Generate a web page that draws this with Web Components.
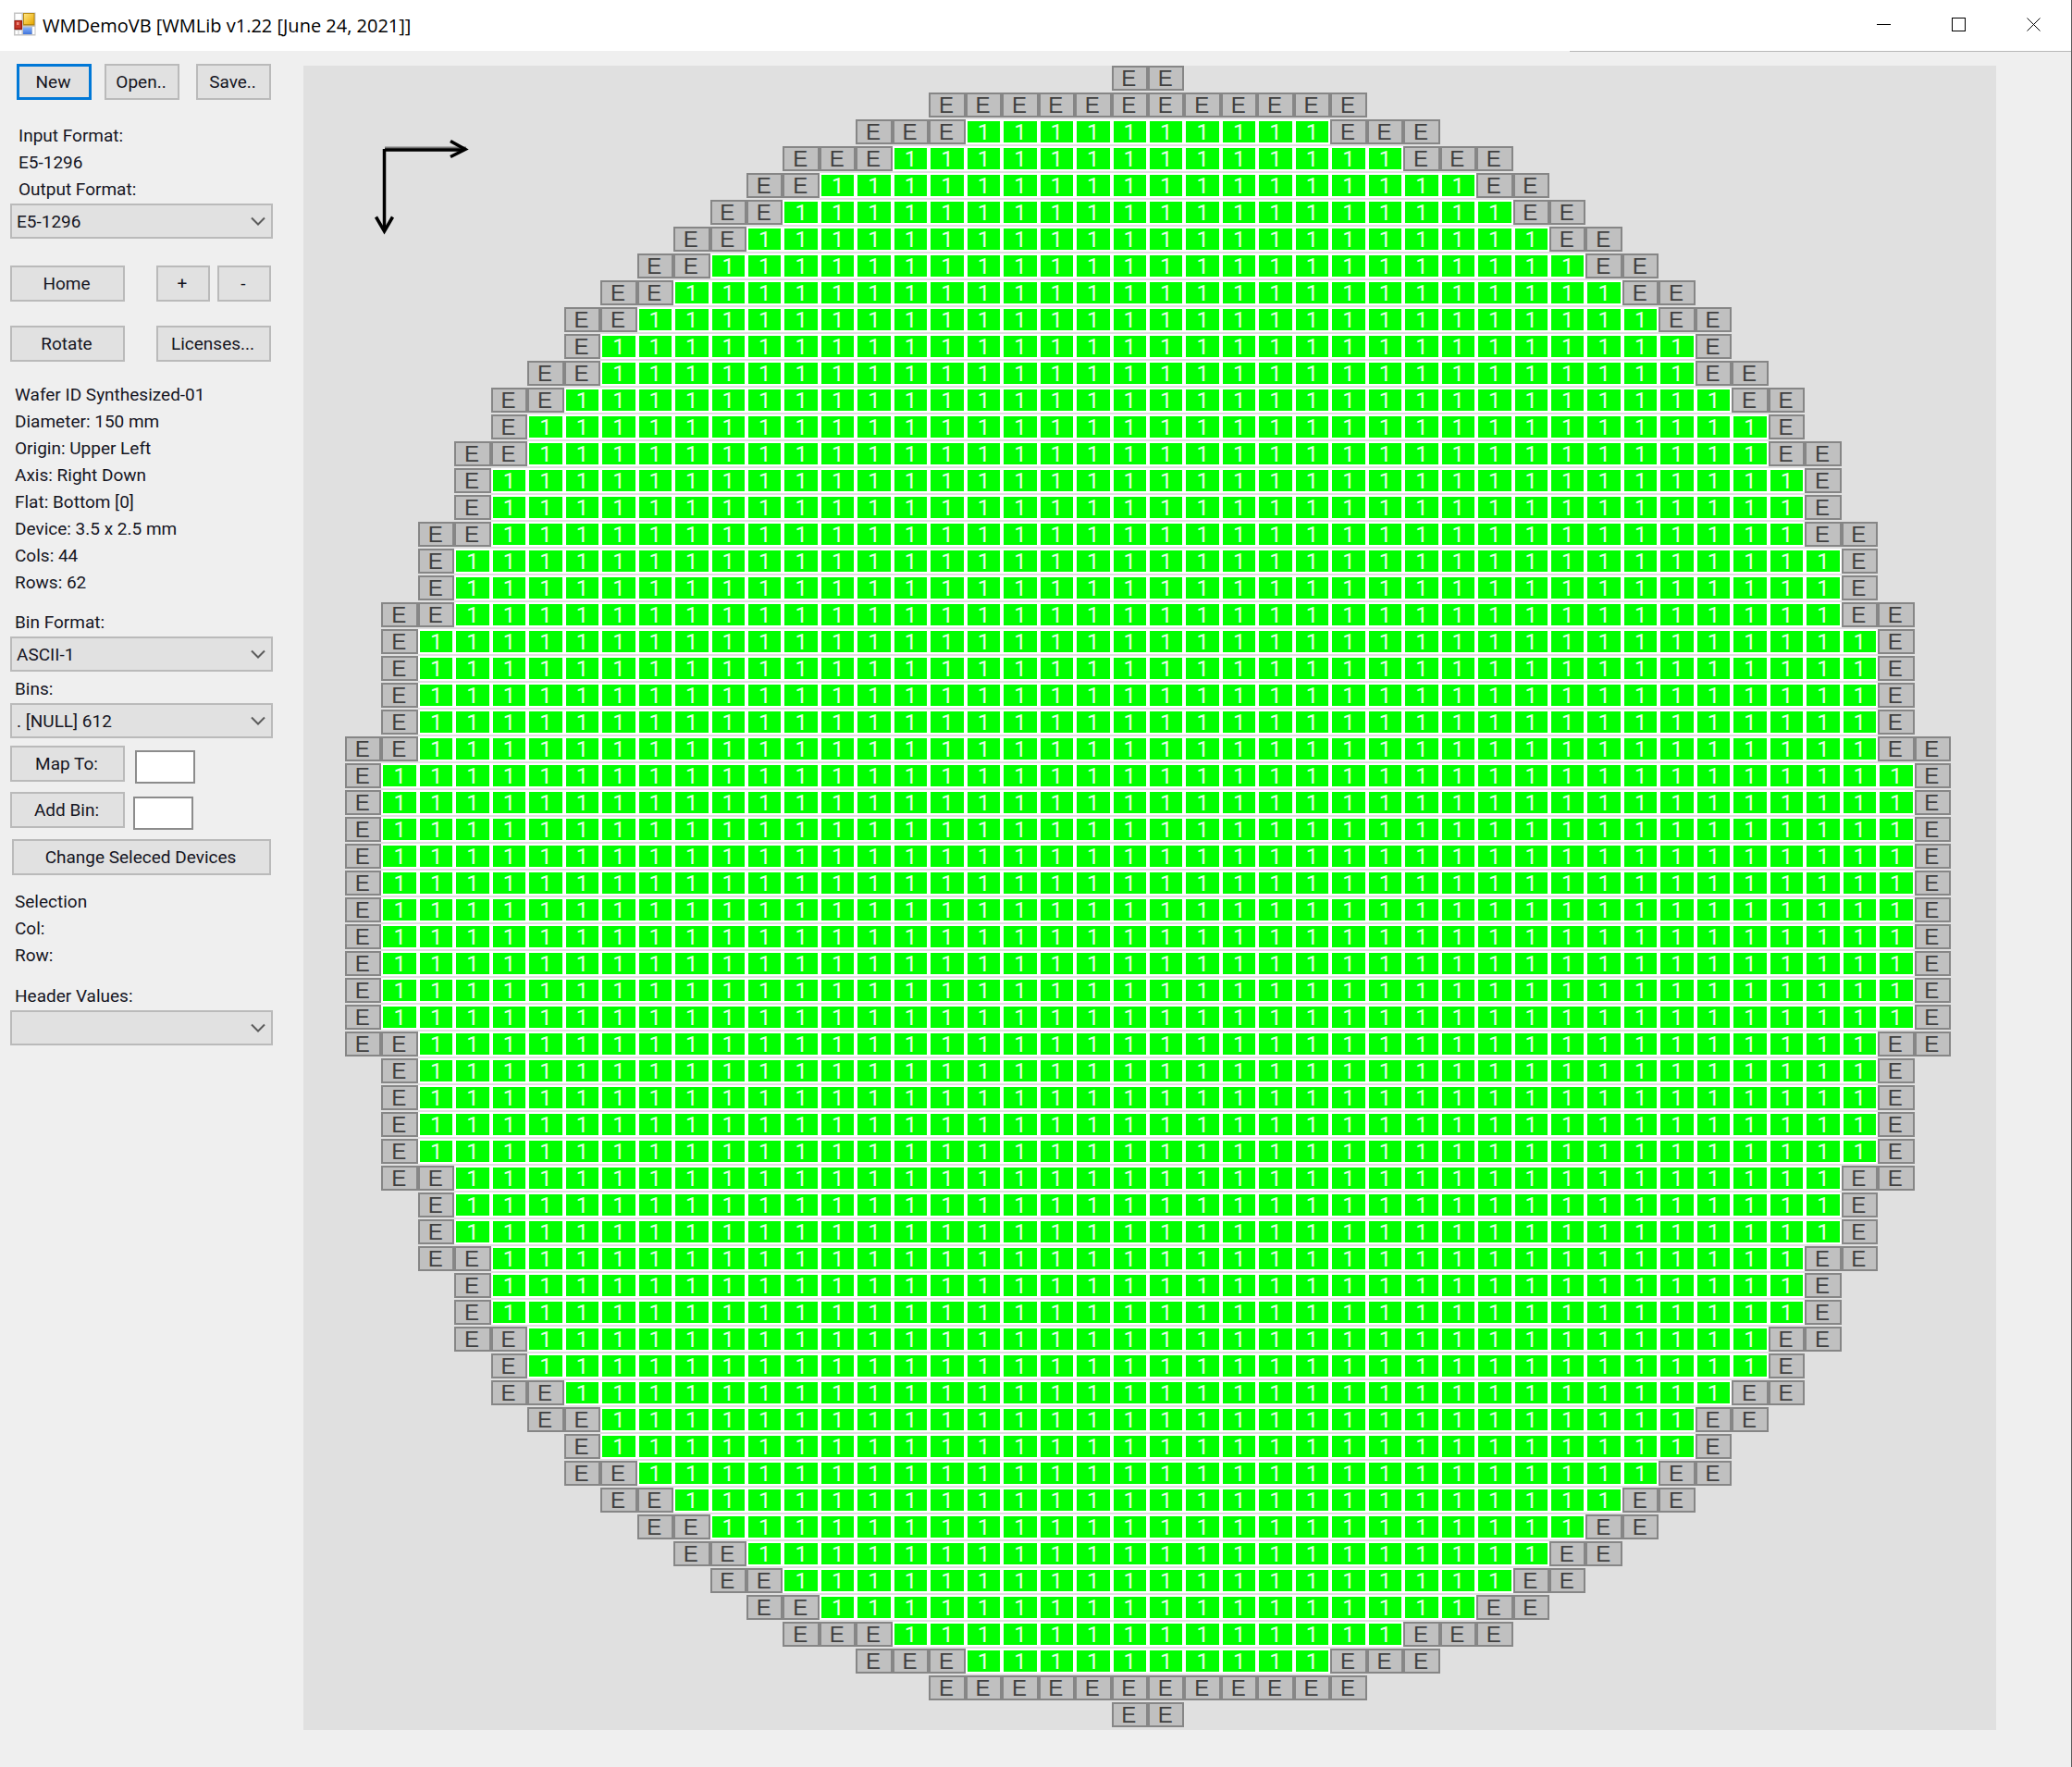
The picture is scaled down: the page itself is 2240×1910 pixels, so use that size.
<!DOCTYPE html>
<html lang="en">
<head>
<meta charset="utf-8">
<title>WMDemoVB [WMLib v1.22 [June 24, 2021]]</title>
<style>
  html { background: #efefef; }
  body { margin: 0; font-family: Roboto, "Liberation Sans", sans-serif; font-size: 19px; color: #15151f; }
</style>
</head>
<body>
<wm-app></wm-app>
<script>
const define = (name, html, setup) => customElements.define(name, class extends HTMLElement {
  connectedCallback() {
    if (this.shadowRoot) return;
    this.attachShadow({ mode: 'open' }).innerHTML = html;
    if (setup) setup(this, this.shadowRoot);
  }
});

/* Window caption: icon, title and the three window controls */
define('wm-titlebar', `
<style>
  :host { display: block; background: #fff; }
  .bar { display: flex; align-items: center; height: 55px; padding-left: 14px; gap: 7px; }
  h1 { flex: 1; margin: 0; font: 400 20px/28px "Open Sans", "Noto Sans", sans-serif; color: #000; }
  .controls { display: flex; }
  button { display: grid; place-items: center; width: 81px; height: 55px; margin: 0; padding: 0 0 2px; border: 0; background: none; }
  svg { display: block; }
  .bar > svg { margin-bottom: 3px; }
  .rule { display: flex; justify-content: flex-end; height: 1px; background: #efefef; }
  .rule i { width: 542px; background: #b8b8b8; }
</style>
<div class="bar">
  <svg width="25" height="26" viewBox="0 0 25 26" aria-hidden="true">
    <defs>
      <linearGradient id="y" x1="0" y1="0" x2="1" y2="1"><stop offset="0" stop-color="#ffe480"/><stop offset="1" stop-color="#e8a800"/></linearGradient>
      <linearGradient id="b" x1="0" y1="0" x2="0" y2="1"><stop offset="0" stop-color="#8ab4fa"/><stop offset="1" stop-color="#3f74dc"/></linearGradient>
    </defs>
    <rect x="1" y="0.500" width="23.500" height="25" fill="#c4c4c4"/>
    <rect x="2.500" y="2" width="7" height="6.500" fill="#fff"/>
    <rect x="2.500" y="20" width="3" height="4" fill="#fff"/>
    <rect x="6.500" y="20" width="3" height="4" fill="#fff"/>
    <rect x="21" y="16" width="2.500" height="8" fill="#fff"/>
    <rect x="11" y="1" width="12.500" height="13.500" fill="#b88a10"/>
    <rect x="12" y="2" width="10.500" height="11" fill="url(#y)"/>
    <rect x="1.500" y="9" width="8.500" height="10" fill="#9c1c12"/>
    <rect x="2.500" y="10" width="6" height="7.500" fill="#c8382a"/>
    <rect x="4" y="11" width="2.500" height="3" fill="#ee8a7c"/>
    <rect x="11" y="16.500" width="9.500" height="7.500" fill="url(#b)"/>
  </svg>
  <h1>WMDemoVB [WMLib v1.22 [June 24, 2021]]</h1>
  <div class="controls">
    <button aria-label="Minimize"><svg width="15" height="15"><path d="M0 7.500H15" stroke="#000"/></svg></button>
    <button aria-label="Maximize"><svg width="15" height="15"><rect x=".5" y=".5" width="14" height="14" fill="none" stroke="#000"/></svg></button>
    <button aria-label="Close"><svg width="15" height="15"><path d="M0.500 0.500L14.500 14.500M14.500 0.500L0.500 14.500" stroke="#000"/></svg></button>
  </div>
</div>
<div class="rule"><i></i></div>`);

/* Push button; "focused" draws the default-button ring */
define('wm-button', `
<style>
  :host { display: flex; height: 39px; }
  button { flex: 1; margin: 0; padding: 0 2px 0 0; font: inherit; color: inherit; white-space: nowrap;
           background: #e1e1e1; border: 2px solid #bababa; }
  :host([focused]) button { border: 3px solid #0078d7; }
</style>
<button><slot></slot></button>`);

/* Caption above a drop-down */
define('wm-field', `
<style>
  :host { display: grid; row-gap: 1px; }
  label { padding-left: var(--label-inset, 5px); line-height: 29px; }
  .box { display: grid; align-items: center; }
  .box > * { grid-area: 1 / 1; }
  select { appearance: none; width: 100%; height: 38px; margin: 0; padding: 0 5px; border-radius: 0;
           font: inherit; color: inherit; background: #e1e1e1; border: 2px solid #bababa; }
  svg { justify-self: end; margin-right: 8px; pointer-events: none; }
</style>
<label for="s"></label>
<div class="box">
  <select id="s"><option></option></select>
  <svg width="16" height="10" viewBox="0 0 16 10" aria-hidden="true"><path d="M1 1.500L8 8.500L15 1.500" fill="none" stroke="#5c5c5c" stroke-width="2"/></svg>
</div>`, (el, root) => {
  root.querySelector('label').textContent = el.getAttribute('label');
  root.querySelector('option').textContent = el.getAttribute('value') || '';
});

/* Button with a short text box beside it */
define('wm-entry', `
<style>
  :host { display: flex; height: 39px; }
  button { width: 124px; margin: 0; padding: 0 2px 0 0; font: inherit; color: inherit;
           background: #e1e1e1; border: 2px solid #bababa; }
  input { box-sizing: border-box; width: 65px; height: 36px; margin: 5px 0 0 var(--entry-gap, 10px); padding: 0 4px;
          font: inherit; background: #fff; border: 2px solid #8c8c8c; }
</style>
<button id="b"><slot></slot></button><input type="text" aria-labelledby="b">`);

/* Stack of read-only lines */
define('wm-lines', `
<style>
  :host { display: block; line-height: 29px; padding-left: 5px; }
  ::slotted(p) { margin: 0; white-space: nowrap; }
</style>
<slot></slot>`);

/* Round wafer: [first column, edge dies per side] for each row; the rows are mirrored left to right */
const COLS = 44;
const ROWS = [
  [21,1],[16,6],[14,3],[12,3],[11,2],[10,2],[9,2],[8,2],[7,2],[6,2],[6,1],
  [5,2],[4,2],[4,1],[3,2],[3,1],[3,1],[2,2],[2,1],[2,1],[1,2],
  [1,1],[1,1],[1,1],[1,1],[0,2],[0,1],[0,1],[0,1],[0,1],[0,1],
  [0,1],[0,1],[0,1],[0,1],[0,1],[0,2],[1,1],[1,1],[1,1],[1,1],
  [1,2],[2,1],[2,1],[2,2],[3,1],[3,1],[3,2],[4,1],[4,2],[5,2],
  [6,1],[6,2],[7,2],[8,2],[9,2],[10,2],[11,2],[12,3],[14,3],[16,6],[21,1]
];

define('wafer-map', `
<style>
  :host { display: block; position: relative; background: #e0e0e0; padding: 0 49px 3px 45px; }
  .grid { display: grid; grid-template-columns: repeat(44, minmax(0, 1fr)); grid-auto-rows: 27px; row-gap: 2px;
          font: 24px/24px "Liberation Sans", Arial, sans-serif; text-align: center; }
  .grid span { box-sizing: border-box; height: 27px; border: 2px solid; }
  .e { background: #c0c0c0; border-color: #868686 !important; color: #404040; padding-right: 2px; }
  .p { background: #00ff00; border-color: #fff !important; color: #e6ffe6; font-family: Roboto, sans-serif; line-height: 25px; }
  .axis { position: absolute; left: 76px; top: 77px; }
</style>
<div class="grid"></div>
<svg class="axis" width="104" height="108" viewBox="0 0 104 108" aria-hidden="true">
  <path d="M12 11.500H100" stroke="#777" stroke-width="2"/>
  <path d="M12 14H98M11.500 13V101" stroke="#000" stroke-width="3.500" fill="none"/>
  <path d="M83 4.500L99 13.500L83 21.500M2.500 86.500L11.500 102L20.500 86.500" fill="none" stroke="#000" stroke-width="3.500"/>
</svg>`, (el, root) => {
  let html = '';
  ROWS.forEach(([start, edge], r) => {
    for (let c = start; c < COLS - start; c++) {
      const isEdge = c < start + edge || c >= COLS - start - edge;
      html += `<span class="${isEdge ? 'e' : 'p'}" style="grid-area:${r + 1}/${c + 1}">${isEdge ? 'E' : '1'}</span>`;
    }
  });
  root.querySelector('.grid').innerHTML = html;
});

define('wm-sidebar', `
<style>
  :host { display: flex; flex-direction: column; box-sizing: border-box; width: 328px; padding: 13px 33px 0 11px; }
  .row { display: flex; justify-content: space-between; }
  .files { justify-content: flex-start; padding: 0 2px 0 7px; }
  .files wm-button { width: 81px; height: 39px; margin-bottom: 1px; }
  .files wm-button[focused] { margin-right: 14px; }
  .files wm-button:last-child { margin-left: auto; }
  .pair { padding-right: 2px; }
  .pair > wm-button, .zoom { width: 124px; }
  .zoom wm-button { width: 58px; }
  .in { margin-top: 23px; padding-left: 9px; }
  .out { --label-inset: 9px; }
</style>
<div class="row files"><wm-button focused>New</wm-button><wm-button>Open..</wm-button><wm-button>Save..</wm-button></div>
<wm-lines class="in"><p>Input Format:</p><p>E5-1296</p></wm-lines>
<wm-field class="out" label="Output Format:" value="E5-1296"></wm-field>
<div class="row pair" style="margin-top:29px"><wm-button>Home</wm-button><div class="row zoom"><wm-button>+</wm-button><wm-button>-</wm-button></div></div>
<div class="row pair" style="margin-top:26px"><wm-button>Rotate</wm-button><wm-button>Licenses...</wm-button></div>
<wm-lines style="margin-top:21px"><p>Wafer ID Synthesized-01</p><p>Diameter: 150 mm</p><p>Origin: Upper Left</p><p>Axis: Right Down</p><p>Flat: Bottom [0]</p><p>Device: 3.5 x 2.5 mm</p><p>Cols: 44</p><p>Rows: 62</p></wm-lines>
<wm-field style="margin-top:14px" label="Bin Format:" value="ASCII-1"></wm-field>
<wm-field style="margin-top:4px" label="Bins:" value=". [NULL] 612"></wm-field>
<wm-entry style="margin-top:8px;--entry-gap:11px">Map To:</wm-entry>
<wm-entry style="margin-top:11px;--entry-gap:9px">Add Bin:</wm-entry>
<wm-button style="margin:12px 2px 0">Change Seleced Devices</wm-button>
<wm-lines style="margin-top:14px"><p>Selection</p><p>Col:</p><p>Row:</p></wm-lines>
<wm-field style="margin-top:15px" label="Header Values:"></wm-field>`);

define('wm-app', `
<style>
  :host { display: flex; flex-direction: column; box-sizing: border-box; min-height: 100vh; border-right: 1px solid #5a5a5a; }
  main { display: flex; align-items: flex-start; }
  wm-sidebar { flex: none; }
  wafer-map { flex: 1; margin: 15px 81px 0 0; }
</style>
<wm-titlebar></wm-titlebar>
<main><wm-sidebar></wm-sidebar><wafer-map></wafer-map></main>`);
</script>
</body>
</html>
